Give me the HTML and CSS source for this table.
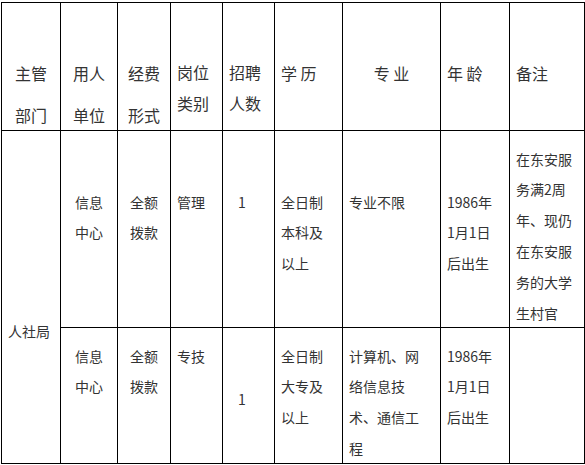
FILE: index.html
```html
<!DOCTYPE html>
<html lang="zh-CN">
<head>
<meta charset="utf-8">
<title>招聘岗位表</title>
<link rel="stylesheet" href="styles.css">
</head>
<body>
<div class="tbl">
  <div class="c h h-tall center">主管<br>部门</div>
  <div class="c h h-tall center">用人<br>单位</div>
  <div class="c h h-tall center">经费<br>形式</div>
  <div class="c h h-two">岗位<br>类别</div>
  <div class="c h h-two">招聘<br>人数</div>
  <div class="c h h-one">学 历</div>
  <div class="c h h-one center">专 业</div>
  <div class="c h h-one">年 龄</div>
  <div class="c h h-one">备注</div>

  <div class="c side">人社局</div>
  <div class="c center">信息<br>中心</div>
  <div class="c center">全额<br>拨款</div>
  <div class="c">管理</div>
  <div class="c num">1</div>
  <div class="c">全日制<br>本科及<br>以上</div>
  <div class="c">专业不限</div>
  <div class="c">1986年<br>1月1日<br>后出生</div>
  <div class="c top">在东安服<br>务满2周<br>年、现仍<br>在东安服<br>务的大学<br>生村官</div>

  <div class="c top center">信息<br>中心</div>
  <div class="c top center">全额<br>拨款</div>
  <div class="c top">专技</div>
  <div class="c num">1</div>
  <div class="c top">全日制<br>大专及<br>以上</div>
  <div class="c top">计算机、网<br>络信息技<br>术、通信工<br>程</div>
  <div class="c top">1986年<br>1月1日<br>后出生</div>
  <div class="c top"></div>
</div>
</body>
</html>
```

FILE: styles.css
```css
html, body {
  margin: 0;
  background: #fff;
}
body {
  font-family: "Noto Sans CJK SC", "Noto Sans", sans-serif;
  color: #333;
}
.tbl {
  display: grid;
  grid-template-columns: 58px 56px 52px 51px 51px 67px 97px 68px 74px;
  grid-template-rows: 127px 196px 135px;
  gap: 1px;
  padding: 1px;
  background: #000;
  margin: 2px 0 0 1px;
  width: max-content;
}
.c {
  background: #fff;
  font-size: 14px;
  line-height: 30.8px;
  padding: 55.6px 6px 0;
  white-space: nowrap;
}
.c.top {
  padding-top: 12.6px;
}
.center {
  text-align: center;
  padding-left: 0;
  padding-right: 0;
}
.h {
  font-size: 16px;
}
.h-tall {
  line-height: 41.5px;
  padding-top: 50px;
}
.h-two {
  line-height: 31.5px;
  padding-top: 53.7px;
}
.h-one {
  line-height: 31.5px;
  padding-top: 55px;
}
.side {
  grid-row: span 2;
  padding-top: 184.6px;
}
.num {
  padding-left: 15px;
}
```
